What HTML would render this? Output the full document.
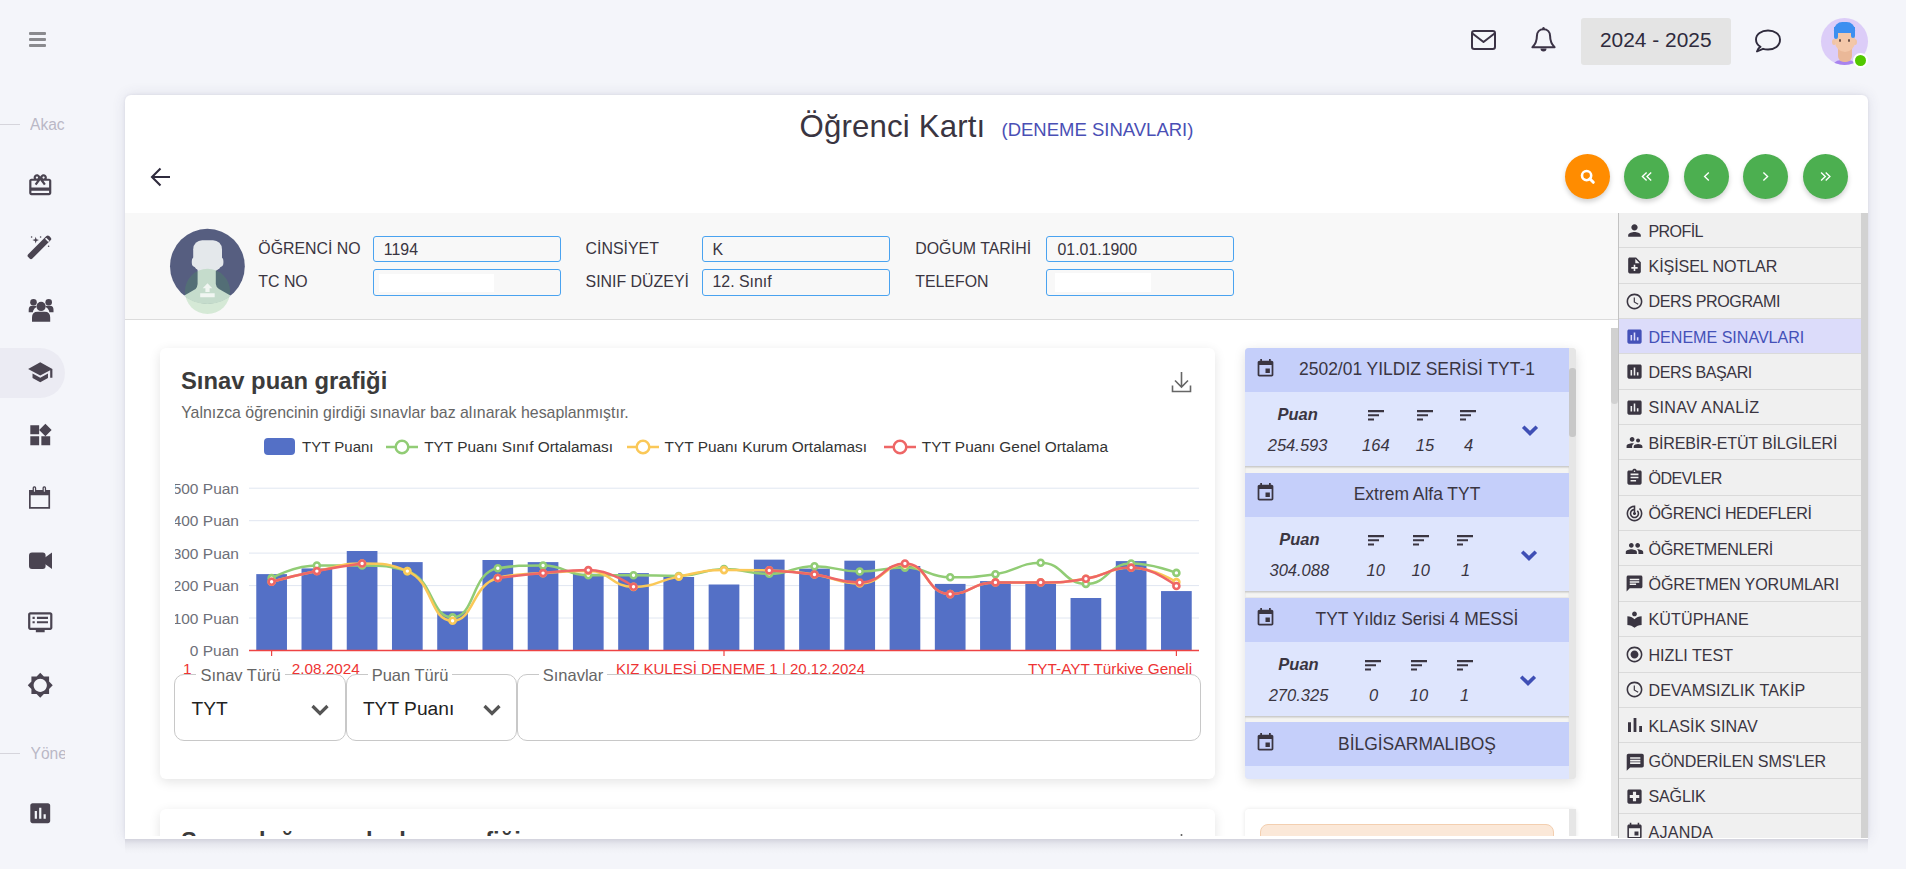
<!DOCTYPE html>
<html><head><meta charset="utf-8">
<style>
*{margin:0;padding:0;box-sizing:border-box}
html,body{width:1906px;height:869px;overflow:hidden;background:#f4f5fa;font-family:"Liberation Sans",sans-serif;color:#3a3541}
.a{position:absolute;line-height:1;white-space:nowrap}
svg{position:absolute;overflow:visible}
.ic{fill:#4a4451}
</style></head><body>
<!-- LEFT SIDEBAR -->
<div class="a" style="left:29px;top:32px;width:17px;height:3px;background:#8a8a8e;border-radius:1px"></div>
<div class="a" style="left:29px;top:38px;width:17px;height:3px;background:#8a8a8e;border-radius:1px"></div>
<div class="a" style="left:29px;top:43.5px;width:17px;height:3px;background:#8a8a8e;border-radius:1px"></div>
<div class="a" style="left:0;top:124px;width:20px;height:1px;background:#d6d5dc"></div>
<div class="a" style="left:30px;top:116.5px;width:35.2px;height:22px;overflow:hidden;font-size:15.6px;color:#bab8c6">Akac</div>
<div class="a" style="left:0;top:348px;width:65px;height:50px;background:#ebebf3;border-radius:0 25px 25px 0"></div>
<svg style="left:27.05px;top:171.75px;width:26.50px;height:26.50px" viewBox="0 0 24 24"><path d="M20 6h-2.18c.11-.31.18-.65.18-1 0-1.66-1.34-3-3-3-1.05 0-1.96.54-2.5 1.35l-.5.67-.5-.68C10.96 2.54 10.05 2 9 2 7.34 2 6 3.34 6 5c0 .35.07.69.18 1H4c-1.11 0-1.99.89-1.99 2L2 19c0 1.11.89 2 2 2h16c1.11 0 2-.89 2-2V8c0-1.11-.89-2-2-2zm-5-2c.55 0 1 .45 1 1s-.45 1-1 1-1-.45-1-1 .45-1 1-1zM9 4c.55 0 1 .45 1 1s-.45 1-1 1-1-.45-1-1 .45-1 1-1zm11 15H4v-2h16v2zm0-5H4V8h5.08L7 10.83 8.62 12 11 8.76l1-1.36 1 1.36L15.38 12 17 10.83 14.92 8H20v6z" fill="#4a4451"/></svg>
<svg style="left:27.05px;top:358.75px;width:26.50px;height:26.50px" viewBox="0 0 24 24"><path d="M5 13.18v4L12 21l7-3.82v-4L12 17l-7-3.82zM12 3L1 9l11 6 9-4.91V17h2V9L12 3z" fill="#4a4451"/></svg>
<svg style="left:27.05px;top:421.75px;width:26.50px;height:26.50px" viewBox="0 0 24 24"><path d="M13 13v8h8v-8h-8zM3 21h8v-8H3v8zM3 3v8h8V3H3zm13.66-1.31L11 7.34 16.66 13l5.66-5.66-5.66-5.65z" fill="#4a4451"/></svg>
<svg style="left:27.05px;top:608.75px;width:26.50px;height:26.50px" viewBox="0 0 24 24"><path d="M21 3H3c-1.1 0-2 .9-2 2v12c0 1.1.9 2 2 2h5v2h8v-2h5c1.1 0 1.99-.9 1.99-2L23 5c0-1.1-.9-2-2-2zm0 14H3V5h18v12zM5 7h2v2H5zm0 4h2v2H5zm4-4h10v2H9zm0 4h10v2H9z" fill="#4a4451"/></svg>
<svg style="left:27.05px;top:671.75px;width:26.50px;height:26.50px" viewBox="0 0 24 24"><path d="M20 15.31L23.31 12 20 8.69V4h-4.69L12 .69 8.69 4H4v4.69L.69 12 4 15.31V20h4.69L12 23.31 15.31 20H20v-4.69zM12 18c-3.31 0-6-2.69-6-6s2.69-6 6-6 6 2.69 6 6-2.69 6-6 6z" fill="#4a4451"/></svg>
<svg style="left:27.05px;top:799.75px;width:26.50px;height:26.50px" viewBox="0 0 24 24"><path d="M19 3H5c-1.1 0-2 .9-2 2v14c0 1.1.9 2 2 2h14c1.1 0 2-.9 2-2V5c0-1.1-.9-2-2-2zM9 17H7v-7h2v7zm4 0h-2V7h2v10zm4 0h-2v-4h2v4z" fill="#4a4451"/></svg>
<svg style="left:0;top:0;width:100px;height:869px">
<g fill="#4a4451">
<path d="M28.2 254.3 L46.4 236.1 Q47.8 234.7 49.2 236.1 L50.6 237.5 Q52 238.9 50.6 240.3 L32.4 258.5 Q31 259.9 29.6 258.5 L28.2 257.1 Q26.8 255.7 28.2 254.3Z"/>
<path d="M35.7 236.8 L36.5 239.3 L39 240.1 L36.5 240.9 L35.7 243.4 L34.9 240.9 L32.4 240.1 L34.9 239.3Z"/>
<circle cx="31.6" cy="237" r="0.8"/><circle cx="40.6" cy="237" r="0.8"/><circle cx="48.6" cy="246.2" r="0.8"/>
<circle cx="41.1" cy="306.4" r="4.6"/><circle cx="33.5" cy="302.3" r="3.3"/><circle cx="48.7" cy="302.3" r="3.3"/>
<path d="M32 321.7 V317.5 Q32 311.8 37.5 311.8 H44.7 Q50.2 311.8 50.2 317.5 V321.7Z"/>
<path d="M28.7 312.2 V309.8 Q28.7 305.8 32.2 305.8 H35.3 Q36.4 305.8 36.4 307 Q34.2 308 33.3 310.6 L32.8 312.2Z"/>
<path d="M53.5 312.2 V309.8 Q53.5 305.8 50 305.8 H46.9 Q45.8 305.8 45.8 307 Q48 308 48.9 310.6 L49.4 312.2Z"/>
<path d="M29 490 H50.1 V508.7 H29Z M30.7 495.2 V507.1 H48.4 V495.2Z" fill-rule="evenodd"/>
<rect x="32.6" y="486.3" width="3.6" height="6.5" rx="1.6"/><rect x="42.5" y="486.3" width="3.6" height="6.5" rx="1.6"/>
<path d="M32 552.4 H42.6 Q45.6 552.4 45.6 555.4 V566.1 Q45.6 569.1 42.6 569.1 H32 Q29 569.1 29 566.1 V555.4 Q29 552.4 32 552.4Z"/>
<path d="M45 557.5 L52 552.6 V569 L45 564Z"/>
</g>
<g fill="#f4f5fa"><rect x="33.9" y="487.6" width="1" height="4.2" rx="0.5"/><rect x="43.8" y="487.6" width="1" height="4.2" rx="0.5"/></g>
<path d="M45.6 238.2 L48.8 241.4" stroke="#f4f5fa" stroke-width="1.6"/>
</svg>
<div class="a" style="left:0;top:753px;width:20px;height:1px;background:#d6d5dc"></div>
<div class="a" style="left:30.5px;top:745.5px;width:34.7px;height:22px;overflow:hidden;font-size:15.6px;color:#bab8c6">Yöne</div>

<!-- TOP BAR -->

<svg style="left:1470px;top:29px;width:27px;height:22px" viewBox="0 0 27 22"><rect x="2" y="2" width="23" height="18" rx="2.2" fill="none" stroke="#3b3346" stroke-width="2"/><path d="M2.5 4.5 L13.5 13 L24.5 4.5" fill="none" stroke="#3b3346" stroke-width="2" stroke-linejoin="round"/></svg>
<svg style="left:1530px;top:26px;width:27px;height:27px" viewBox="0 0 27 27"><path d="M13.5 3.2c-4 0-6.6 3-6.6 6.8 0 5-1.2 8-4.5 11.2h22.2c-3.3-3.2-4.5-6.2-4.5-11.2 0-3.8-2.6-6.8-6.6-6.8z" fill="none" stroke="#3b3346" stroke-width="2" stroke-linejoin="round"/><circle cx="13.5" cy="2.2" r="1.2" fill="#3b3346"/><path d="M10.5 22.5a3 3 0 0 0 6 0z" fill="#3b3346"/></svg>
<div class="a" style="left:1581px;top:18px;width:150px;height:47px;background:#e4e4e4;border-radius:3px"></div>
<div class="a" style="left:1600px;top:29.9px;font-size:20.9px;color:#2f2b3d">2024 - 2025</div>
<svg style="left:1754px;top:28px;width:28px;height:26px" viewBox="0 0 28 26"><path d="M4.5 20.5 L3 23.5 L9 20.8 C10.5 21.3 12.2 21.5 14 21.5 C20.6 21.5 26 18 26 11.5 C26 6 20.6 2.5 14 2.5 C7.4 2.5 2 6 2 11.5 C2 14.5 3.5 17 6.5 18.8 Z" fill="none" stroke="#2f2b3d" stroke-width="1.9" stroke-linejoin="round"/></svg>
<div class="a" style="left:1821px;top:18px;width:47px;height:47px;border-radius:50%;background:#dccdf8;overflow:hidden">
 <div class="a" style="left:10px;top:42px;width:27px;height:10px;background:#a883ee;border-radius:10px 10px 0 0"></div>
 <div class="a" style="left:16.5px;top:28px;width:14px;height:16px;background:#eab898;border-radius:0 0 6px 6px"></div>
 <div class="a" style="left:11px;top:20.5px;width:4px;height:6px;background:#f0c4a6;border-radius:50%"></div>
 <div class="a" style="left:32px;top:20.5px;width:4px;height:6px;background:#f0c4a6;border-radius:50%"></div>
 <div class="a" style="left:13.5px;top:10px;width:20px;height:24px;background:#f3c7a9;border-radius:6px 6px 10px 10px"></div>
 <div class="a" style="left:13px;top:3.5px;width:20.5px;height:11px;background:#3d8ff0;border-radius:9px 9px 1px 3px"></div>
 <div class="a" style="left:13px;top:9px;width:4px;height:12px;background:#3d8ff0;border-radius:0 0 2px 2px"></div>
 <div class="a" style="left:30px;top:9px;width:3.5px;height:11px;background:#3d8ff0;border-radius:0 0 2px 2px"></div>
 <div class="a" style="left:18px;top:21px;width:2px;height:2.5px;background:#6b5048;border-radius:50%"></div>
 <div class="a" style="left:26.5px;top:21px;width:2px;height:2.5px;background:#6b5048;border-radius:50%"></div>
</div>
<div class="a" style="left:1852.7px;top:52.8px;width:15.5px;height:15.5px;border-radius:50%;background:#52c800;border:2px solid #fff"></div>


<!-- MAIN CARD -->
<div class="a" style="left:125px;top:95px;width:1743px;height:744px;background:#fff;border-radius:6px 6px 0 0;box-shadow:0 0 3px rgba(60,60,100,0.10),0 0 14px rgba(60,60,100,0.12)"></div>
<div class="a" style="left:799.5px;top:111px;font-size:31.2px;letter-spacing:0.17px;color:#3a3541">Öğrenci Kartı</div>
<div class="a" style="left:1001.5px;top:121.4px;font-size:18.5px;color:#4a4fb5">(DENEME SINAVLARI)</div>
<svg style="left:150px;top:167px;width:21px;height:20px" viewBox="0 0 21 20"><path d="M20 10H2 M10.5 1.5 L2 10 L10.5 18.5" fill="none" stroke="#2f2b3d" stroke-width="2.1"/></svg><div class="a" style="left:1564.9px;top:154px;width:45px;height:45px;border-radius:50%;background:#ff8c00;box-shadow:0 3px 5px rgba(0,0,0,0.18)"></div><div class="a" style="left:1623.8px;top:154px;width:45px;height:45px;border-radius:50%;background:#4caf50;box-shadow:0 3px 5px rgba(0,0,0,0.18)"></div><div class="a" style="left:1683.7px;top:154px;width:45px;height:45px;border-radius:50%;background:#4caf50;box-shadow:0 3px 5px rgba(0,0,0,0.18)"></div><div class="a" style="left:1743.0px;top:154px;width:45px;height:45px;border-radius:50%;background:#4caf50;box-shadow:0 3px 5px rgba(0,0,0,0.18)"></div><div class="a" style="left:1803.0px;top:154px;width:45px;height:45px;border-radius:50%;background:#4caf50;box-shadow:0 3px 5px rgba(0,0,0,0.18)"></div><svg style="left:1577.5px;top:166.5px;width:20px;height:20px" viewBox="0 0 20 20"><circle cx="8.6" cy="8.6" r="4.6" fill="none" stroke="#fff" stroke-width="2.6"/><path d="M11.8 11.8 L15.3 15.3" stroke="#fff" stroke-width="3" stroke-linecap="round"/></svg><svg style="left:0;top:0;width:1906px;height:869px;pointer-events:none"><path d="M1646.60 172.4 L1642.40 176.4 L1646.60 180.4" fill="none" stroke="#fff" stroke-width="1.35"/><path d="M1651.20 172.4 L1647.00 176.4 L1651.20 180.4" fill="none" stroke="#fff" stroke-width="1.35"/><path d="M1708.80 172.4 L1704.60 176.4 L1708.80 180.4" fill="none" stroke="#fff" stroke-width="1.35"/><path d="M1763.40 172.4 L1767.60 176.4 L1763.40 180.4" fill="none" stroke="#fff" stroke-width="1.35"/><path d="M1821.10 172.4 L1825.30 176.4 L1821.10 180.4" fill="none" stroke="#fff" stroke-width="1.35"/><path d="M1825.70 172.4 L1829.90 176.4 L1825.70 180.4" fill="none" stroke="#fff" stroke-width="1.35"/></svg>

<!-- INFO STRIP -->
<div class="a" style="left:125px;top:213px;width:1493px;height:107px;background:#f8f8f8;border-bottom:1px solid #dcdcdc"></div>
<svg style="left:0;top:0;width:400px;height:400px"><defs><clipPath id="avc"><circle cx="207.4" cy="266.2" r="37.9"/></clipPath></defs>
<circle cx="207.4" cy="266.2" r="37.4" fill="#565e80"/>
<g clip-path="url(#avc)" fill="#e4e8eb">
<rect x="193.2" y="240.2" width="28.8" height="31" rx="9"/>
<rect x="191.8" y="257" width="31.6" height="10" rx="4"/>
<path d="M197.6 266 H215.8 V284 Q216 287 219 289 L233 297 L250 306 V320 H165 V306 L181.8 297 L195.6 289 Q197.4 287 197.6 284Z"/>
</g>
<circle cx="207.5" cy="291.4" r="22.6" fill="rgba(76,175,80,0.2)"/>
<path d="M207.5 283.3 L212.3 288.3 H209.6 V292 H205.4 V288.3 H202.7Z M200.2 293.2 H214.7 V297.2 H200.2Z" fill="rgba(255,255,255,0.75)"/>
</svg><div class="a" style="left:258.3px;top:241.33px;font-size:15.9px;color:#3a3541">ÖĞRENCİ NO</div><div class="a" style="left:258.3px;top:273.83px;font-size:15.9px;color:#3a3541">TC NO</div><div class="a" style="left:585.6px;top:241.33px;font-size:15.9px;color:#3a3541">CİNSİYET</div><div class="a" style="left:585.6px;top:273.83px;font-size:15.9px;color:#3a3541">SINIF DÜZEYİ</div><div class="a" style="left:915.2px;top:241.33px;font-size:15.9px;color:#3a3541">DOĞUM TARİHİ</div><div class="a" style="left:915.2px;top:273.83px;font-size:15.9px;color:#3a3541">TELEFON</div><div class="a" style="left:373.0px;top:236px;width:188px;height:26px;border:1.3px solid #4aa3f0;border-radius:3px"></div><div class="a" style="left:373.0px;top:269px;width:188px;height:27px;border:1.3px solid #4aa3f0;border-radius:3px"></div><div class="a" style="left:702.0px;top:236px;width:188px;height:26px;border:1.3px solid #4aa3f0;border-radius:3px"></div><div class="a" style="left:702.0px;top:269px;width:188px;height:27px;border:1.3px solid #4aa3f0;border-radius:3px"></div><div class="a" style="left:1046.4px;top:236px;width:188px;height:26px;border:1.3px solid #4aa3f0;border-radius:3px"></div><div class="a" style="left:1046.4px;top:269px;width:188px;height:27px;border:1.3px solid #4aa3f0;border-radius:3px"></div><div class="a" style="left:379px;top:274px;width:115px;height:18px;background:#fff"></div><div class="a" style="left:1055px;top:272.5px;width:96px;height:19px;background:#fff"></div><div class="a" style="left:383.8px;top:241.53px;font-size:15.9px;color:#3a3541">1194</div><div class="a" style="left:712.5px;top:241.53px;font-size:15.9px;color:#3a3541">K</div><div class="a" style="left:1057.5px;top:241.53px;font-size:15.9px;color:#3a3541">01.01.1900</div><div class="a" style="left:712.5px;top:274.43px;font-size:15.9px;color:#3a3541">12. Sınıf</div>

<!-- RIGHT MENU -->
<div class="a" style="left:1618px;top:213px;width:250px;height:625px;background:#f0f0f0;border-left:1px solid #c2c2c2;overflow:hidden"><div class="a" style="left:0;top:0.00px;width:243px;height:35.35px;background:transparent;border-bottom:1px solid #dadada"></div><svg style="left:6.30px;top:7.90px;width:19.00px;height:19.00px" viewBox="0 0 24 24"><path d="M12 12c2.21 0 4-1.79 4-4s-1.79-4-4-4-4 1.79-4 4 1.79 4 4 4zm0 2c-2.67 0-8 1.34-8 4v2h16v-2c0-2.66-5.33-4-8-4z" fill="#3a3541"/></svg><div class="a" style="left:29.5px;top:9.64px;font-size:16.1px;letter-spacing:-0.640px;color:#3a3541">PROFİL</div><div class="a" style="left:0;top:35.35px;width:243px;height:35.35px;background:transparent;border-bottom:1px solid #dadada"></div><svg style="left:6.30px;top:43.25px;width:19.00px;height:19.00px" viewBox="0 0 24 24"><path d="M14 2H6c-1.1 0-1.99.9-1.99 2L4 20c0 1.1.89 2 1.99 2H18c1.1 0 2-.9 2-2V8l-6-6zm2 14h-3v3h-2v-3H8v-2h3v-3h2v3h3v2zm-3-7V3.5L18.5 9H13z" fill="#3a3541"/></svg><div class="a" style="left:29.5px;top:44.99px;font-size:16.1px;letter-spacing:-0.092px;color:#3a3541">KİŞİSEL NOTLAR</div><div class="a" style="left:0;top:70.70px;width:243px;height:35.35px;background:transparent;border-bottom:1px solid #dadada"></div><svg style="left:6.30px;top:78.60px;width:19.00px;height:19.00px" viewBox="0 0 24 24"><path d="M11.99 2C6.47 2 2 6.48 2 12s4.47 10 9.99 10C17.52 22 22 17.52 22 12S17.52 2 11.99 2zM12 20c-4.42 0-8-3.58-8-8s3.58-8 8-8 8 3.58 8 8-3.58 8-8 8zm.5-13H11v6l5.25 3.15.75-1.23-4.5-2.67z" fill="#3a3541"/></svg><div class="a" style="left:29.5px;top:80.34px;font-size:16.1px;letter-spacing:-0.408px;color:#3a3541">DERS PROGRAMI</div><div class="a" style="left:0;top:106.05px;width:243px;height:35.35px;background:#dcdcfa;border-bottom:1px solid #dadada"></div><svg style="left:6.30px;top:113.95px;width:19.00px;height:19.00px" viewBox="0 0 24 24"><path d="M19 3H5c-1.1 0-2 .9-2 2v14c0 1.1.9 2 2 2h14c1.1 0 2-.9 2-2V5c0-1.1-.9-2-2-2zM9 17H7v-7h2v7zm4 0h-2V7h2v10zm4 0h-2v-4h2v4z" fill="#4451b8"/></svg><div class="a" style="left:29.5px;top:115.69px;font-size:16.1px;letter-spacing:-0.027px;color:#4451b8">DENEME SINAVLARI</div><div class="a" style="left:0;top:141.40px;width:243px;height:35.35px;background:transparent;border-bottom:1px solid #dadada"></div><svg style="left:6.30px;top:149.30px;width:19.00px;height:19.00px" viewBox="0 0 24 24"><path d="M19 3H5c-1.1 0-2 .9-2 2v14c0 1.1.9 2 2 2h14c1.1 0 2-.9 2-2V5c0-1.1-.9-2-2-2zM9 17H7v-7h2v7zm4 0h-2V7h2v10zm4 0h-2v-4h2v4z" fill="#3a3541"/></svg><div class="a" style="left:29.5px;top:151.04px;font-size:16.1px;letter-spacing:-0.440px;color:#3a3541">DERS BAŞARI</div><div class="a" style="left:0;top:176.75px;width:243px;height:35.35px;background:transparent;border-bottom:1px solid #dadada"></div><svg style="left:6.30px;top:184.65px;width:19.00px;height:19.00px" viewBox="0 0 24 24"><path d="M19 3H5c-1.1 0-2 .9-2 2v14c0 1.1.9 2 2 2h14c1.1 0 2-.9 2-2V5c0-1.1-.9-2-2-2zM9 17H7v-7h2v7zm4 0h-2V7h2v10zm4 0h-2v-4h2v4z" fill="#3a3541"/></svg><div class="a" style="left:29.5px;top:186.39px;font-size:16.1px;letter-spacing:0.318px;color:#3a3541">SINAV ANALİZ</div><div class="a" style="left:0;top:212.10px;width:243px;height:35.35px;background:transparent;border-bottom:1px solid #dadada"></div><svg style="left:6.30px;top:220.00px;width:19.00px;height:19.00px" viewBox="0 0 24 24"><path d="M16.5 12c1.38 0 2.49-1.12 2.49-2.5S17.88 7 16.5 7C15.12 7 14 8.12 14 9.5s1.12 2.5 2.5 2.5zM9 11c1.66 0 2.99-1.34 2.99-3S10.66 5 9 5C7.34 5 6 6.34 6 8s1.34 3 3 3zm7.5 3c-1.83 0-5.5.92-5.5 2.75V19h11v-2.25c0-1.830-3.67-2.75-5.5-2.75zM9 13c-2.33 0-7 1.17-7 3.5V19h7v-2.25c0-.85.33-2.34 2.37-3.47C10.5 13.1 9.66 13 9 13z" fill="#3a3541"/></svg><div class="a" style="left:29.5px;top:221.74px;font-size:16.1px;letter-spacing:-0.190px;color:#3a3541">BİREBİR-ETÜT BİLGİLERİ</div><div class="a" style="left:0;top:247.45px;width:243px;height:35.35px;background:transparent;border-bottom:1px solid #dadada"></div><svg style="left:6.30px;top:255.35px;width:19.00px;height:19.00px" viewBox="0 0 24 24"><path d="M19 3h-4.18C14.4 1.84 13.3 1 12 1c-1.3 0-2.4.84-2.82 2H5c-1.1 0-2 .9-2 2v14c0 1.1.9 2 2 2h14c1.1 0 2-.9 2-2V5c0-1.1-.9-2-2-2zm-7 0c.55 0 1 .45 1 1s-.45 1-1 1-1-.45-1-1 .45-1 1-1zm2 14H7v-2h7v2zm3-4H7v-2h10v2zm0-4H7V7h10v2z" fill="#3a3541"/></svg><div class="a" style="left:29.5px;top:257.09px;font-size:16.1px;letter-spacing:-0.517px;color:#3a3541">ÖDEVLER</div><div class="a" style="left:0;top:282.80px;width:243px;height:35.35px;background:transparent;border-bottom:1px solid #dadada"></div><svg style="left:6.30px;top:290.70px;width:19.00px;height:19.00px" viewBox="0 0 24 24"><path d="M19.07 4.93l-1.41 1.41C19.1 7.79 20 9.79 20 12c0 4.42-3.58 8-8 8s-8-3.58-8-8c0-4.08 3.05-7.44 7-7.93v2.02C8.16 6.57 6 9.03 6 12c0 3.31 2.69 6 6 6s6-2.69 6-6c0-1.66-.67-3.16-1.76-4.24l-1.41 1.41C15.55 9.9 16 10.9 16 12c0 2.21-1.79 4-4 4s-4-1.790-4-4c0-1.86 1.28-3.41 3-3.86v2.14c-.6.35-1 .98-1 1.72 0 1.1.9 2 2 2s2-.9 2-2c0-.74-.4-1.38-1-1.72V2h-1C6.48 2 2 6.48 2 12s4.48 10 10 10 10-4.48 10-10c0-2.76-1.12-5.26-2.93-7.07z" fill="#3a3541"/></svg><div class="a" style="left:29.5px;top:292.44px;font-size:16.1px;letter-spacing:-0.400px;color:#3a3541">ÖĞRENCİ HEDEFLERİ</div><div class="a" style="left:0;top:318.15px;width:243px;height:35.35px;background:transparent;border-bottom:1px solid #dadada"></div><svg style="left:6.30px;top:326.05px;width:19.00px;height:19.00px" viewBox="0 0 24 24"><path d="M16 11c1.66 0 2.99-1.34 2.99-3S17.66 5 16 5c-1.66 0-3 1.34-3 3s1.34 3 3 3zm-8 0c1.66 0 2.99-1.34 2.99-3S9.66 5 8 5C6.34 5 5 6.34 5 8s1.34 3 3 3zm0 2c-2.33 0-7 1.17-7 3.5V19h14v-2.5c0-2.33-4.67-3.5-7-3.5zm8 0c-.29 0-.62.02-.97.05 1.16.84 1.97 1.97 1.97 3.45V19h6v-2.5c0-2.33-4.67-3.5-7-3.5z" fill="#3a3541"/></svg><div class="a" style="left:29.5px;top:327.79px;font-size:16.1px;letter-spacing:-0.373px;color:#3a3541">ÖĞRETMENLERİ</div><div class="a" style="left:0;top:353.50px;width:243px;height:35.35px;background:transparent;border-bottom:1px solid #dadada"></div><svg style="left:6.30px;top:361.40px;width:19.00px;height:19.00px" viewBox="0 0 24 24"><path d="M20 2H4c-1.1 0-1.99.9-1.99 2L2 22l4-4h14c1.1 0 2-.9 2-2V4c0-1.1-.9-2-2-2zM6 9h12v2H6V9zm8 5H6v-2h8v2zm4-6H6V6h12v2z" fill="#3a3541"/></svg><div class="a" style="left:29.5px;top:363.14px;font-size:16.1px;letter-spacing:-0.118px;color:#3a3541">ÖĞRETMEN YORUMLARI</div><div class="a" style="left:0;top:388.85px;width:243px;height:35.35px;background:transparent;border-bottom:1px solid #dadada"></div><svg style="left:6.30px;top:396.75px;width:19.00px;height:19.00px" viewBox="0 0 24 24"><path d="M12 11.55C9.64 9.35 6.48 8 3 8v11c3.48 0 6.64 1.35 9 3.55 2.36-2.19 5.52-3.55 9-3.55V8c-3.48 0-6.64 1.35-9 3.55zM12 8c1.66 0 3-1.34 3-3s-1.34-3-3-3-3 1.34-3 3 1.34 3 3 3z" fill="#3a3541"/></svg><div class="a" style="left:29.5px;top:398.49px;font-size:16.1px;letter-spacing:0.113px;color:#3a3541">KÜTÜPHANE</div><div class="a" style="left:0;top:424.20px;width:243px;height:35.35px;background:transparent;border-bottom:1px solid #dadada"></div><svg style="left:6.30px;top:432.10px;width:19.00px;height:19.00px" viewBox="0 0 24 24"><path d="M12 7c-2.76 0-5 2.24-5 5s2.24 5 5 5 5-2.24 5-5-2.24-5-5-5zm0-5C6.48 2 2 6.48 2 12s4.48 10 10 10 10-4.48 10-10S17.52 2 12 2zm0 18c-4.42 0-8-3.58-8-8s3.58-8 8-8 8 3.58 8 8-3.58 8-8 8z" fill="#3a3541"/></svg><div class="a" style="left:29.5px;top:433.84px;font-size:16.1px;letter-spacing:-0.011px;color:#3a3541">HIZLI TEST</div><div class="a" style="left:0;top:459.55px;width:243px;height:35.35px;background:transparent;border-bottom:1px solid #dadada"></div><svg style="left:6.30px;top:467.45px;width:19.00px;height:19.00px" viewBox="0 0 24 24"><path d="M11.99 2C6.47 2 2 6.48 2 12s4.47 10 9.99 10C17.52 22 22 17.52 22 12S17.52 2 11.99 2zM12 20c-4.42 0-8-3.58-8-8s3.58-8 8-8 8 3.58 8 8-3.58 8-8 8zm.5-13H11v6l5.25 3.15.75-1.23-4.5-2.67z" fill="#3a3541"/></svg><div class="a" style="left:29.5px;top:469.19px;font-size:16.1px;letter-spacing:0.131px;color:#3a3541">DEVAMSIZLIK TAKİP</div><div class="a" style="left:0;top:494.90px;width:243px;height:35.35px;background:transparent;border-bottom:1px solid #dadada"></div><svg style="left:3.80px;top:500.30px;width:24.00px;height:24.00px" viewBox="0 0 24 24"><path d="M5 9.2h3V19H5zM10.6 5h2.8v14h-2.8zm5.6 8H19v6h-2.8z" fill="#3a3541"/></svg><div class="a" style="left:29.5px;top:504.54px;font-size:16.1px;letter-spacing:0.109px;color:#3a3541">KLASİK SINAV</div><div class="a" style="left:0;top:530.25px;width:243px;height:35.35px;background:transparent;border-bottom:1px solid #dadada"></div><svg style="left:5.75px;top:538.80px;width:20.50px;height:20.50px" viewBox="0 0 24 24"><path d="M20 2H4c-1.1 0-1.99.9-1.99 2L2 22l4-4h14c1.1 0 2-.9 2-2V4c0-1.1-.9-2-2-2zM18 14H6v-2h12v2zm0-3H6V9h12v2zm0-3H6V6h12v2z" fill="#3a3541"/></svg><div class="a" style="left:29.5px;top:539.89px;font-size:16.1px;letter-spacing:-0.141px;color:#3a3541">GÖNDERİLEN SMS'LER</div><div class="a" style="left:0;top:565.60px;width:243px;height:35.35px;background:transparent;border-bottom:1px solid #dadada"></div><svg style="left:6.30px;top:573.50px;width:19.00px;height:19.00px" viewBox="0 0 24 24"><path d="M19 3H5c-1.1 0-1.99.9-1.99 2L3 19c0 1.1.9 2 2 2h14c1.1 0 2-.9 2-2V5c0-1.1-.9-2-2-2zm-1 11h-4v4h-4v-4H6v-4h4V6h4v4h4v4z" fill="#3a3541"/></svg><div class="a" style="left:29.5px;top:575.24px;font-size:16.1px;letter-spacing:-0.180px;color:#3a3541">SAĞLIK</div><div class="a" style="left:0;top:600.95px;width:243px;height:35.35px;background:transparent;border-bottom:1px solid #dadada"></div><svg style="left:6.30px;top:608.85px;width:19.00px;height:19.00px" viewBox="0 0 24 24"><path d="M17 12h-5v5h5v-5zM16 1v2H8V1H6v2H5c-1.11 0-1.99.9-1.99 2L3 19c0 1.1.89 2 2 2h14c1.1 0 2-.9 2-2V5c0-1.1-.9-2-2-2h-1V1h-2zm3 18H5V8h14v11z" fill="#3a3541"/></svg><div class="a" style="left:29.5px;top:610.59px;font-size:16.1px;letter-spacing:0.220px;color:#3a3541">AJANDA</div><div class="a" style="left:242px;top:0;width:8px;height:626px;background:#d2d2d2"></div></div>

<!-- CONTENT -->
<div class="a" style="left:1611px;top:327.5px;width:7px;height:509px;background:#e9e9e9"></div><div class="a" style="left:1611px;top:327.5px;width:7px;height:76px;background:#d1d1d1;border-radius:0 0 3.5px 3.5px"></div><div class="a" style="left:160px;top:348px;width:1055px;height:431px;background:#fff;border-radius:6px;box-shadow:0 3px 12px rgba(0,0,0,0.11)"></div><div class="a" style="left:181px;top:368.90px;font-size:23.8px;font-weight:bold;color:#3b3b3b">Sınav puan grafiği</div><div class="a" style="left:181.2px;top:404.53px;font-size:15.9px;color:#666">Yalnızca öğrencinin girdiği sınavlar baz alınarak hesaplanmıştır.</div><svg style="left:1171px;top:371px;width:21px;height:22px" viewBox="0 0 21 22"><path d="M10.5 1 V16 M4 9.5 L10.5 16 L17 9.5 M1.5 14.5 V20.5 H19.5 V14.5" fill="none" stroke="#666" stroke-width="1.6"/></svg><div class="a" style="left:264px;top:438px;width:31px;height:17px;background:#5470c6;border-radius:4px"></div><div class="a" style="left:302.1px;top:439.24px;font-size:15.0px;color:#333">TYT Puanı</div><svg style="left:386.0px;top:437px;width:32px;height:20px" viewBox="0 0 32 20"><path d="M0 10 H9 M23 10 H32" stroke="#91cc75" stroke-width="2.5"/><circle cx="16" cy="10" r="6.3" fill="#fff" stroke="#91cc75" stroke-width="2.5"/></svg><div class="a" style="left:424.2px;top:439.48px;font-size:15.4px;color:#333">TYT Puanı Sınıf Ortalaması</div><svg style="left:626.8px;top:437px;width:32px;height:20px" viewBox="0 0 32 20"><path d="M0 10 H9 M23 10 H32" stroke="#fac858" stroke-width="2.5"/><circle cx="16" cy="10" r="6.3" fill="#fff" stroke="#fac858" stroke-width="2.5"/></svg><div class="a" style="left:664.6px;top:439.48px;font-size:15.4px;color:#333">TYT Puanı Kurum Ortalaması</div><svg style="left:883.7px;top:437px;width:32px;height:20px" viewBox="0 0 32 20"><path d="M0 10 H9 M23 10 H32" stroke="#ee6666" stroke-width="2.5"/><circle cx="16" cy="10" r="6.3" fill="#fff" stroke="#ee6666" stroke-width="2.5"/></svg><div class="a" style="left:921.8px;top:439.48px;font-size:15.4px;color:#333">TYT Puanı Genel Ortalama</div><div class="a" style="left:174.5px;top:475px;width:68.5px;height:190px;overflow:hidden"><div class="a" style="right:4px;top:168.03px;font-size:15.5px;color:#6e7079">0 Puan</div><div class="a" style="right:4px;top:135.58px;font-size:15.5px;color:#6e7079">100 Puan</div><div class="a" style="right:4px;top:103.13px;font-size:15.5px;color:#6e7079">200 Puan</div><div class="a" style="right:4px;top:70.68px;font-size:15.5px;color:#6e7079">300 Puan</div><div class="a" style="right:4px;top:38.23px;font-size:15.5px;color:#6e7079">400 Puan</div><div class="a" style="right:4px;top:5.78px;font-size:15.5px;color:#6e7079">500 Puan</div></div><svg style="left:0;top:0;width:1906px;height:869px"><line x1="249" y1="618.0" x2="1199" y2="618.0" stroke="#e0e6f1" stroke-width="1"/>
<line x1="249" y1="585.6" x2="1199" y2="585.6" stroke="#e0e6f1" stroke-width="1"/>
<line x1="249" y1="553.1" x2="1199" y2="553.1" stroke="#e0e6f1" stroke-width="1"/>
<line x1="249" y1="520.7" x2="1199" y2="520.7" stroke="#e0e6f1" stroke-width="1"/>
<line x1="249" y1="488.2" x2="1199" y2="488.2" stroke="#e0e6f1" stroke-width="1"/>
<rect x="256.27" y="574.11" width="30.70" height="76.39" fill="#5470c6"/>
<rect x="301.51" y="568.40" width="30.70" height="82.10" fill="#5470c6"/>
<rect x="346.75" y="551.01" width="30.70" height="99.49" fill="#5470c6"/>
<rect x="391.98" y="562.11" width="30.70" height="88.39" fill="#5470c6"/>
<rect x="437.22" y="611.40" width="30.70" height="39.10" fill="#5470c6"/>
<rect x="482.46" y="560.00" width="30.70" height="90.50" fill="#5470c6"/>
<rect x="527.70" y="562.11" width="30.70" height="88.39" fill="#5470c6"/>
<rect x="572.94" y="573.82" width="30.70" height="76.68" fill="#5470c6"/>
<rect x="618.17" y="573.11" width="30.70" height="77.39" fill="#5470c6"/>
<rect x="663.41" y="577.00" width="30.70" height="73.50" fill="#5470c6"/>
<rect x="708.65" y="584.50" width="30.70" height="66.00" fill="#5470c6"/>
<rect x="753.89" y="559.64" width="30.70" height="90.86" fill="#5470c6"/>
<rect x="799.13" y="568.60" width="30.70" height="81.90" fill="#5470c6"/>
<rect x="844.36" y="560.68" width="30.70" height="89.82" fill="#5470c6"/>
<rect x="889.60" y="566.00" width="30.70" height="84.50" fill="#5470c6"/>
<rect x="934.84" y="583.91" width="30.70" height="66.59" fill="#5470c6"/>
<rect x="980.08" y="581.09" width="30.70" height="69.41" fill="#5470c6"/>
<rect x="1025.32" y="583.91" width="30.70" height="66.59" fill="#5470c6"/>
<rect x="1070.55" y="598.00" width="30.70" height="52.50" fill="#5470c6"/>
<rect x="1115.79" y="561.10" width="30.70" height="89.40" fill="#5470c6"/>
<rect x="1161.03" y="591.08" width="30.70" height="59.42" fill="#5470c6"/>
<line x1="249" y1="650.5" x2="1199" y2="650.5" stroke="#ee4444" stroke-width="1.5"/>
<line x1="271.6" y1="650.5" x2="271.6" y2="656" stroke="#ee4444" stroke-width="1.2"/>
<line x1="724.0" y1="650.5" x2="724.0" y2="656" stroke="#ee4444" stroke-width="1.2"/>
<line x1="1176.4" y1="650.5" x2="1176.4" y2="656" stroke="#ee4444" stroke-width="1.2"/>
<path d="M271.62,578.14 C271.62,578.14 293.81,565.48 316.86,565.48 C339.05,565.48 339.56,565.48 362.10,565.48 C384.80,565.48 388.64,565.48 407.33,571.09 C433.88,579.07 430.30,617.40 452.57,617.40 C475.54,617.40 470.86,572.46 497.81,568.30 C516.10,565.48 520.66,565.48 543.05,565.48 C565.90,565.48 565.41,575.22 588.29,575.22 C610.65,575.22 610.91,575.22 633.52,575.22 C656.14,575.22 656.27,575.99 678.76,575.99 C701.51,575.99 701.31,569.05 724.00,569.05 C746.55,569.05 746.71,573.82 769.24,573.82 C791.95,573.82 791.78,566.19 814.48,566.19 C837.01,566.19 837.06,571.52 859.71,571.52 C882.30,571.52 882.55,567.59 904.95,567.59 C927.78,567.59 927.34,577.29 950.19,577.29 C972.58,577.29 973.13,577.29 995.43,574.21 C1018.37,571.04 1018.81,562.79 1040.67,562.79 C1064.05,562.79 1063.22,583.91 1085.90,583.91 C1108.45,583.91 1107.72,563.53 1131.14,563.53 C1152.95,563.53 1176.38,572.88 1176.38,572.88" fill="none" stroke="#91cc75" stroke-width="2.5"/>
<circle cx="271.62" cy="578.14" r="3.0" fill="#fff" stroke="#91cc75" stroke-width="2.6"/>
<circle cx="316.86" cy="565.48" r="3.0" fill="#fff" stroke="#91cc75" stroke-width="2.6"/>
<circle cx="362.10" cy="565.48" r="3.0" fill="#fff" stroke="#91cc75" stroke-width="2.6"/>
<circle cx="407.33" cy="571.09" r="3.0" fill="#fff" stroke="#91cc75" stroke-width="2.6"/>
<circle cx="452.57" cy="617.40" r="3.0" fill="#fff" stroke="#91cc75" stroke-width="2.6"/>
<circle cx="497.81" cy="568.30" r="3.0" fill="#fff" stroke="#91cc75" stroke-width="2.6"/>
<circle cx="543.05" cy="565.48" r="3.0" fill="#fff" stroke="#91cc75" stroke-width="2.6"/>
<circle cx="588.29" cy="575.22" r="3.0" fill="#fff" stroke="#91cc75" stroke-width="2.6"/>
<circle cx="633.52" cy="575.22" r="3.0" fill="#fff" stroke="#91cc75" stroke-width="2.6"/>
<circle cx="678.76" cy="575.99" r="3.0" fill="#fff" stroke="#91cc75" stroke-width="2.6"/>
<circle cx="724.00" cy="569.05" r="3.0" fill="#fff" stroke="#91cc75" stroke-width="2.6"/>
<circle cx="769.24" cy="573.82" r="3.0" fill="#fff" stroke="#91cc75" stroke-width="2.6"/>
<circle cx="814.48" cy="566.19" r="3.0" fill="#fff" stroke="#91cc75" stroke-width="2.6"/>
<circle cx="859.71" cy="571.52" r="3.0" fill="#fff" stroke="#91cc75" stroke-width="2.6"/>
<circle cx="904.95" cy="567.59" r="3.0" fill="#fff" stroke="#91cc75" stroke-width="2.6"/>
<circle cx="950.19" cy="577.29" r="3.0" fill="#fff" stroke="#91cc75" stroke-width="2.6"/>
<circle cx="995.43" cy="574.21" r="3.0" fill="#fff" stroke="#91cc75" stroke-width="2.6"/>
<circle cx="1040.67" cy="562.79" r="3.0" fill="#fff" stroke="#91cc75" stroke-width="2.6"/>
<circle cx="1085.90" cy="583.91" r="3.0" fill="#fff" stroke="#91cc75" stroke-width="2.6"/>
<circle cx="1131.14" cy="563.53" r="3.0" fill="#fff" stroke="#91cc75" stroke-width="2.6"/>
<circle cx="1176.38" cy="572.88" r="3.0" fill="#fff" stroke="#91cc75" stroke-width="2.6"/>
<path d="M271.62,581.71 C271.62,581.71 294.08,575.57 316.86,571.00 C339.32,566.49 339.48,563.53 362.10,563.53 C384.72,563.53 388.98,563.53 407.33,571.09 C434.22,582.18 429.09,620.81 452.57,620.81 C474.33,620.81 471.67,584.71 497.81,578.01 C516.91,573.11 520.37,574.86 543.05,573.11 C565.61,571.36 566.31,571.00 588.29,571.00 C611.55,571.00 610.53,586.90 633.52,586.90 C655.77,586.90 655.97,580.84 678.76,576.61 C701.21,572.44 701.26,570.09 724.00,570.09 C746.50,570.09 746.67,570.09 769.24,570.41 C791.90,570.74 792.03,571.32 814.48,574.57 C837.26,577.86 837.83,583.49 859.71,583.49 C883.06,583.49 883.44,564.18 904.95,564.18 C928.68,564.18 925.89,594.10 950.19,594.10 C971.13,594.10 972.44,582.39 995.43,582.39 C1017.68,582.39 1018.08,582.39 1040.67,582.39 C1063.32,582.39 1063.58,582.39 1085.90,578.79 C1108.81,575.09 1108.74,567.75 1131.14,567.75 C1153.98,567.75 1176.38,582.10 1176.38,582.10" fill="none" stroke="#fac858" stroke-width="2.5"/>
<circle cx="271.62" cy="581.71" r="3.0" fill="#fff" stroke="#fac858" stroke-width="2.6"/>
<circle cx="316.86" cy="571.00" r="3.0" fill="#fff" stroke="#fac858" stroke-width="2.6"/>
<circle cx="362.10" cy="563.53" r="3.0" fill="#fff" stroke="#fac858" stroke-width="2.6"/>
<circle cx="407.33" cy="571.09" r="3.0" fill="#fff" stroke="#fac858" stroke-width="2.6"/>
<circle cx="452.57" cy="620.81" r="3.0" fill="#fff" stroke="#fac858" stroke-width="2.6"/>
<circle cx="497.81" cy="578.01" r="3.0" fill="#fff" stroke="#fac858" stroke-width="2.6"/>
<circle cx="543.05" cy="573.11" r="3.0" fill="#fff" stroke="#fac858" stroke-width="2.6"/>
<circle cx="588.29" cy="571.00" r="3.0" fill="#fff" stroke="#fac858" stroke-width="2.6"/>
<circle cx="633.52" cy="586.90" r="3.0" fill="#fff" stroke="#fac858" stroke-width="2.6"/>
<circle cx="678.76" cy="576.61" r="3.0" fill="#fff" stroke="#fac858" stroke-width="2.6"/>
<circle cx="724.00" cy="570.09" r="3.0" fill="#fff" stroke="#fac858" stroke-width="2.6"/>
<circle cx="769.24" cy="570.41" r="3.0" fill="#fff" stroke="#fac858" stroke-width="2.6"/>
<circle cx="814.48" cy="574.57" r="3.0" fill="#fff" stroke="#fac858" stroke-width="2.6"/>
<circle cx="859.71" cy="583.49" r="3.0" fill="#fff" stroke="#fac858" stroke-width="2.6"/>
<circle cx="904.95" cy="564.18" r="3.0" fill="#fff" stroke="#fac858" stroke-width="2.6"/>
<circle cx="950.19" cy="594.10" r="3.0" fill="#fff" stroke="#fac858" stroke-width="2.6"/>
<circle cx="995.43" cy="582.39" r="3.0" fill="#fff" stroke="#fac858" stroke-width="2.6"/>
<circle cx="1040.67" cy="582.39" r="3.0" fill="#fff" stroke="#fac858" stroke-width="2.6"/>
<circle cx="1085.90" cy="578.79" r="3.0" fill="#fff" stroke="#fac858" stroke-width="2.6"/>
<circle cx="1131.14" cy="567.75" r="3.0" fill="#fff" stroke="#fac858" stroke-width="2.6"/>
<circle cx="1176.38" cy="582.10" r="3.0" fill="#fff" stroke="#fac858" stroke-width="2.6"/>
<path d="M271.62,581.80 C271.62,581.80 294.09,575.69 316.86,571.09 C339.32,566.56 362.10,563.53 362.10,563.53 M497.81,578.01 C497.81,578.01 520.39,575.09 543.05,573.11 C565.63,571.13 566.36,570.09 588.29,570.09 C611.59,570.09 633.52,586.70 633.52,586.70 M769.24,570.41 C769.24,570.41 791.99,571.49 814.48,574.50 C837.22,577.55 837.84,582.52 859.71,582.52 C883.08,582.52 883.54,563.53 904.95,563.53 C928.78,563.53 925.82,594.10 950.19,594.10 C971.05,594.10 972.44,582.39 995.43,582.39 C1017.68,582.39 1018.09,582.39 1040.67,582.39 C1063.32,582.39 1063.58,582.34 1085.90,578.69 C1108.82,574.94 1109.06,567.59 1131.14,567.59 C1154.30,567.59 1176.38,585.99 1176.38,585.99" fill="none" stroke="#ee6666" stroke-width="2.5"/>
<circle cx="271.62" cy="581.80" r="3.0" fill="#fff" stroke="#ee6666" stroke-width="2.6"/>
<circle cx="316.86" cy="571.09" r="3.0" fill="#fff" stroke="#ee6666" stroke-width="2.6"/>
<circle cx="362.10" cy="563.53" r="3.0" fill="#fff" stroke="#ee6666" stroke-width="2.6"/>
<circle cx="497.81" cy="578.01" r="3.0" fill="#fff" stroke="#ee6666" stroke-width="2.6"/>
<circle cx="543.05" cy="573.11" r="3.0" fill="#fff" stroke="#ee6666" stroke-width="2.6"/>
<circle cx="588.29" cy="570.09" r="3.0" fill="#fff" stroke="#ee6666" stroke-width="2.6"/>
<circle cx="633.52" cy="586.70" r="3.0" fill="#fff" stroke="#ee6666" stroke-width="2.6"/>
<circle cx="769.24" cy="570.41" r="3.0" fill="#fff" stroke="#ee6666" stroke-width="2.6"/>
<circle cx="814.48" cy="574.50" r="3.0" fill="#fff" stroke="#ee6666" stroke-width="2.6"/>
<circle cx="859.71" cy="582.52" r="3.0" fill="#fff" stroke="#ee6666" stroke-width="2.6"/>
<circle cx="904.95" cy="563.53" r="3.0" fill="#fff" stroke="#ee6666" stroke-width="2.6"/>
<circle cx="950.19" cy="594.10" r="3.0" fill="#fff" stroke="#ee6666" stroke-width="2.6"/>
<circle cx="995.43" cy="582.39" r="3.0" fill="#fff" stroke="#ee6666" stroke-width="2.6"/>
<circle cx="1040.67" cy="582.39" r="3.0" fill="#fff" stroke="#ee6666" stroke-width="2.6"/>
<circle cx="1085.90" cy="578.69" r="3.0" fill="#fff" stroke="#ee6666" stroke-width="2.6"/>
<circle cx="1131.14" cy="567.59" r="3.0" fill="#fff" stroke="#ee6666" stroke-width="2.6"/>
<circle cx="1176.38" cy="585.99" r="3.0" fill="#fff" stroke="#ee6666" stroke-width="2.6"/></svg><div class="a" style="left:173px;top:655px;width:1026px;height:30px;overflow:hidden"><div class="a" style="left:10.0px;top:5.80px;font-size:15.3px;color:#ee3333">1</div><div class="a" style="left:118.7px;top:5.80px;font-size:15.3px;color:#ee3333">2.08.2024</div><div class="a" style="left:443.0px;top:5.84px;font-size:15.0px;color:#ee3333">KIZ KULESİ DENEME 1 | 20.12.2024</div><div class="a" style="left:855.0px;top:5.80px;font-size:15.3px;color:#ee3333">TYT-AYT Türkiye Geneli</div></div><div class="a" style="left:174.4px;top:673.6px;width:171.5px;height:67.2px;border:1px solid #c8c8c8;border-radius:10px;background:#fff"></div><div class="a" style="left:196.4px;top:666.66px;font-size:16.5px;color:#666;background:#fff;padding:0 4px">Sınav Türü</div><div class="a" style="left:191.6px;top:698.64px;font-size:19.2px;color:#222">TYT</div><svg style="left:310.4px;top:702px;width:20px;height:16px" viewBox="0 0 20 16"><path d="M2.5 4 L10 11.5 L17.5 4" fill="none" stroke="#555" stroke-width="3.2"/></svg><div class="a" style="left:345.7px;top:673.6px;width:171.0px;height:67.2px;border:1px solid #c8c8c8;border-radius:10px;background:#fff"></div><div class="a" style="left:367.7px;top:666.66px;font-size:16.5px;color:#666;background:#fff;padding:0 4px">Puan Türü</div><div class="a" style="left:362.9px;top:698.64px;font-size:19.2px;color:#222">TYT Puanı</div><svg style="left:481.7px;top:702px;width:20px;height:16px" viewBox="0 0 20 16"><path d="M2.5 4 L10 11.5 L17.5 4" fill="none" stroke="#555" stroke-width="3.2"/></svg><div class="a" style="left:516.7px;top:673.6px;width:684.3px;height:67.2px;border:1px solid #c8c8c8;border-radius:10px;background:#fff"></div><div class="a" style="left:538.7px;top:666.66px;font-size:16.5px;color:#666;background:#fff;padding:0 4px">Sınavlar</div><div class="a" style="left:160px;top:809px;width:1055px;height:40px;background:#fff;border-radius:6px;box-shadow:0 3px 12px rgba(0,0,0,0.11)"></div><div class="a" style="left:181px;top:829.20px;font-size:23.8px;font-weight:bold;color:#3b3b3b">Sınav doğru yanlış boş grafiği</div><svg style="left:1171px;top:833px;width:21px;height:22px" viewBox="0 0 21 22"><path d="M10.5 1 V16" fill="none" stroke="#666" stroke-width="1.6"/></svg><div class="a" style="left:1245px;top:348px;width:331px;height:431px;background:#e8e8e8;border-radius:4px;box-shadow:0 3px 12px rgba(0,0,0,0.13);overflow:hidden"><div class="a" style="left:0;top:0.0px;width:324px;height:44px;background:#c5cffa"></div><div class="a" style="left:0;top:44.0px;width:324px;height:74px;background:#dee5fd"></div><div class="a" style="left:0;top:118.0px;width:324px;height:6.6px;background:#f4f4f2;box-shadow:inset 0 1.5px 1.5px rgba(0,0,0,0.18)"></div><svg style="left:10.00px;top:9.50px;width:21.00px;height:21.00px" viewBox="0 0 24 24"><path d="M17 12h-5v5h5v-5zM16 1v2H8V1H6v2H5c-1.11 0-1.99.9-1.99 2L3 19c0 1.1.89 2 2 2h14c1.1 0 2-.9 2-2V5c0-1.1-.9-2-2-2h-1V1h-2zm3 18H5V8h14v11z" fill="#3a3541"/></svg><div class="a" style="left:0;top:13.15px;width:344px;text-align:center;font-size:17.45px;color:#3a3541">2502/01 YILDIZ SERİSİ TYT-1</div><div class="a" style="left:12.6px;top:58.26px;width:80px;text-align:center;font-size:16.5px;font-weight:bold;font-style:italic;color:#3a3541">Puan</div><div class="a" style="left:12.6px;top:89.06px;width:80px;text-align:center;font-size:16.5px;font-style:italic;color:#3a3541">254.593</div><svg style="left:122.6px;top:62.0px;width:17px;height:12px" viewBox="0 0 17 12"><path d="M0 1.1 H16 M0 5.3 H11 M0 9.5 H6" stroke="#3a3541" stroke-width="2.1"/></svg><div class="a" style="left:100.8px;top:89.06px;width:60px;text-align:center;font-size:16.5px;font-style:italic;color:#3a3541">164</div><svg style="left:171.7px;top:62.0px;width:17px;height:12px" viewBox="0 0 17 12"><path d="M0 1.1 H16 M0 5.3 H11 M0 9.5 H6" stroke="#3a3541" stroke-width="2.1"/></svg><div class="a" style="left:149.9px;top:89.06px;width:60px;text-align:center;font-size:16.5px;font-style:italic;color:#3a3541">15</div><svg style="left:215.3px;top:62.0px;width:17px;height:12px" viewBox="0 0 17 12"><path d="M0 1.1 H16 M0 5.3 H11 M0 9.5 H6" stroke="#3a3541" stroke-width="2.1"/></svg><div class="a" style="left:193.5px;top:89.06px;width:60px;text-align:center;font-size:16.5px;font-style:italic;color:#3a3541">4</div><svg style="left:275.9px;top:76.0px;width:20px;height:14px" viewBox="0 0 20 14"><path d="M2.2 2.8 L9 9.4 L15.8 2.8" fill="none" stroke="#3f4fb5" stroke-width="3.6"/></svg><div class="a" style="left:0;top:124.8px;width:324px;height:44px;background:#c5cffa"></div><div class="a" style="left:0;top:168.8px;width:324px;height:74px;background:#dee5fd"></div><div class="a" style="left:0;top:242.8px;width:324px;height:6.6px;background:#f4f4f2;box-shadow:inset 0 1.5px 1.5px rgba(0,0,0,0.18)"></div><svg style="left:10.00px;top:134.30px;width:21.00px;height:21.00px" viewBox="0 0 24 24"><path d="M17 12h-5v5h5v-5zM16 1v2H8V1H6v2H5c-1.11 0-1.99.9-1.99 2L3 19c0 1.1.89 2 2 2h14c1.1 0 2-.9 2-2V5c0-1.1-.9-2-2-2h-1V1h-2zm3 18H5V8h14v11z" fill="#3a3541"/></svg><div class="a" style="left:0;top:137.95px;width:344px;text-align:center;font-size:17.45px;color:#3a3541">Extrem Alfa TYT</div><div class="a" style="left:14.3px;top:183.06px;width:80px;text-align:center;font-size:16.5px;font-weight:bold;font-style:italic;color:#3a3541">Puan</div><div class="a" style="left:14.3px;top:213.86px;width:80px;text-align:center;font-size:16.5px;font-style:italic;color:#3a3541">304.088</div><svg style="left:122.6px;top:186.8px;width:17px;height:12px" viewBox="0 0 17 12"><path d="M0 1.1 H16 M0 5.3 H11 M0 9.5 H6" stroke="#3a3541" stroke-width="2.1"/></svg><div class="a" style="left:100.8px;top:213.86px;width:60px;text-align:center;font-size:16.5px;font-style:italic;color:#3a3541">10</div><svg style="left:167.6px;top:186.8px;width:17px;height:12px" viewBox="0 0 17 12"><path d="M0 1.1 H16 M0 5.3 H11 M0 9.5 H6" stroke="#3a3541" stroke-width="2.1"/></svg><div class="a" style="left:145.8px;top:213.86px;width:60px;text-align:center;font-size:16.5px;font-style:italic;color:#3a3541">10</div><svg style="left:212.4px;top:186.8px;width:17px;height:12px" viewBox="0 0 17 12"><path d="M0 1.1 H16 M0 5.3 H11 M0 9.5 H6" stroke="#3a3541" stroke-width="2.1"/></svg><div class="a" style="left:190.6px;top:213.86px;width:60px;text-align:center;font-size:16.5px;font-style:italic;color:#3a3541">1</div><svg style="left:274.9px;top:200.8px;width:20px;height:14px" viewBox="0 0 20 14"><path d="M2.2 2.8 L9 9.4 L15.8 2.8" fill="none" stroke="#3f4fb5" stroke-width="3.6"/></svg><div class="a" style="left:0;top:249.6px;width:324px;height:44px;background:#c5cffa"></div><div class="a" style="left:0;top:293.6px;width:324px;height:74px;background:#dee5fd"></div><div class="a" style="left:0;top:367.6px;width:324px;height:6.6px;background:#f4f4f2;box-shadow:inset 0 1.5px 1.5px rgba(0,0,0,0.18)"></div><svg style="left:10.00px;top:259.10px;width:21.00px;height:21.00px" viewBox="0 0 24 24"><path d="M17 12h-5v5h5v-5zM16 1v2H8V1H6v2H5c-1.11 0-1.99.9-1.99 2L3 19c0 1.1.89 2 2 2h14c1.1 0 2-.9 2-2V5c0-1.1-.9-2-2-2h-1V1h-2zm3 18H5V8h14v11z" fill="#3a3541"/></svg><div class="a" style="left:0;top:262.75px;width:344px;text-align:center;font-size:17.45px;color:#3a3541">TYT Yıldız Serisi 4 MESSİ</div><div class="a" style="left:13.5px;top:307.86px;width:80px;text-align:center;font-size:16.5px;font-weight:bold;font-style:italic;color:#3a3541">Puan</div><div class="a" style="left:13.5px;top:338.66px;width:80px;text-align:center;font-size:16.5px;font-style:italic;color:#3a3541">270.325</div><svg style="left:120.3px;top:311.6px;width:17px;height:12px" viewBox="0 0 17 12"><path d="M0 1.1 H16 M0 5.3 H11 M0 9.5 H6" stroke="#3a3541" stroke-width="2.1"/></svg><div class="a" style="left:98.5px;top:338.66px;width:60px;text-align:center;font-size:16.5px;font-style:italic;color:#3a3541">0</div><svg style="left:165.8px;top:311.6px;width:17px;height:12px" viewBox="0 0 17 12"><path d="M0 1.1 H16 M0 5.3 H11 M0 9.5 H6" stroke="#3a3541" stroke-width="2.1"/></svg><div class="a" style="left:144.0px;top:338.66px;width:60px;text-align:center;font-size:16.5px;font-style:italic;color:#3a3541">10</div><svg style="left:211.5px;top:311.6px;width:17px;height:12px" viewBox="0 0 17 12"><path d="M0 1.1 H16 M0 5.3 H11 M0 9.5 H6" stroke="#3a3541" stroke-width="2.1"/></svg><div class="a" style="left:189.7px;top:338.66px;width:60px;text-align:center;font-size:16.5px;font-style:italic;color:#3a3541">1</div><svg style="left:273.9px;top:325.6px;width:20px;height:14px" viewBox="0 0 20 14"><path d="M2.2 2.8 L9 9.4 L15.8 2.8" fill="none" stroke="#3f4fb5" stroke-width="3.6"/></svg><div class="a" style="left:0;top:374.4px;width:324px;height:44px;background:#c5cffa"></div><div class="a" style="left:0;top:418.4px;width:324px;height:74px;background:#dee5fd"></div><div class="a" style="left:0;top:492.4px;width:324px;height:6.6px;background:#f4f4f2;box-shadow:inset 0 1.5px 1.5px rgba(0,0,0,0.18)"></div><svg style="left:10.00px;top:383.90px;width:21.00px;height:21.00px" viewBox="0 0 24 24"><path d="M17 12h-5v5h5v-5zM16 1v2H8V1H6v2H5c-1.11 0-1.99.9-1.99 2L3 19c0 1.1.89 2 2 2h14c1.1 0 2-.9 2-2V5c0-1.1-.9-2-2-2h-1V1h-2zm3 18H5V8h14v11z" fill="#3a3541"/></svg><div class="a" style="left:0;top:387.55px;width:344px;text-align:center;font-size:17.45px;color:#3a3541">BİLGİSARMALIBOŞ</div><div class="a" style="left:324px;top:0;width:7px;height:431px;background:#e6e6e6"></div><div class="a" style="left:324px;top:20px;width:7px;height:69px;background:#c8c8c8;border-radius:3px"></div></div><div class="a" style="left:1245px;top:809px;width:331px;height:40px;background:#fff;border-radius:4px;box-shadow:0 0 4px rgba(0,0,0,0.1)"></div><div class="a" style="left:1569px;top:809px;width:7px;height:40px;background:#e6e6e6"></div><div class="a" style="left:1260px;top:824px;width:294px;height:30px;background:#fbe8d8;border:1px solid #f3cfb0;border-radius:8px"></div><div class="a" style="left:125px;top:836px;width:1493px;height:3px;background:#fff"></div><div class="a" style="left:125px;top:838.5px;width:1743px;height:31px;background:linear-gradient(#d3d3dd,#e6e7ee 5px,#f1f2f7 11px,#f4f5fa 15px)"></div>
</body></html>
